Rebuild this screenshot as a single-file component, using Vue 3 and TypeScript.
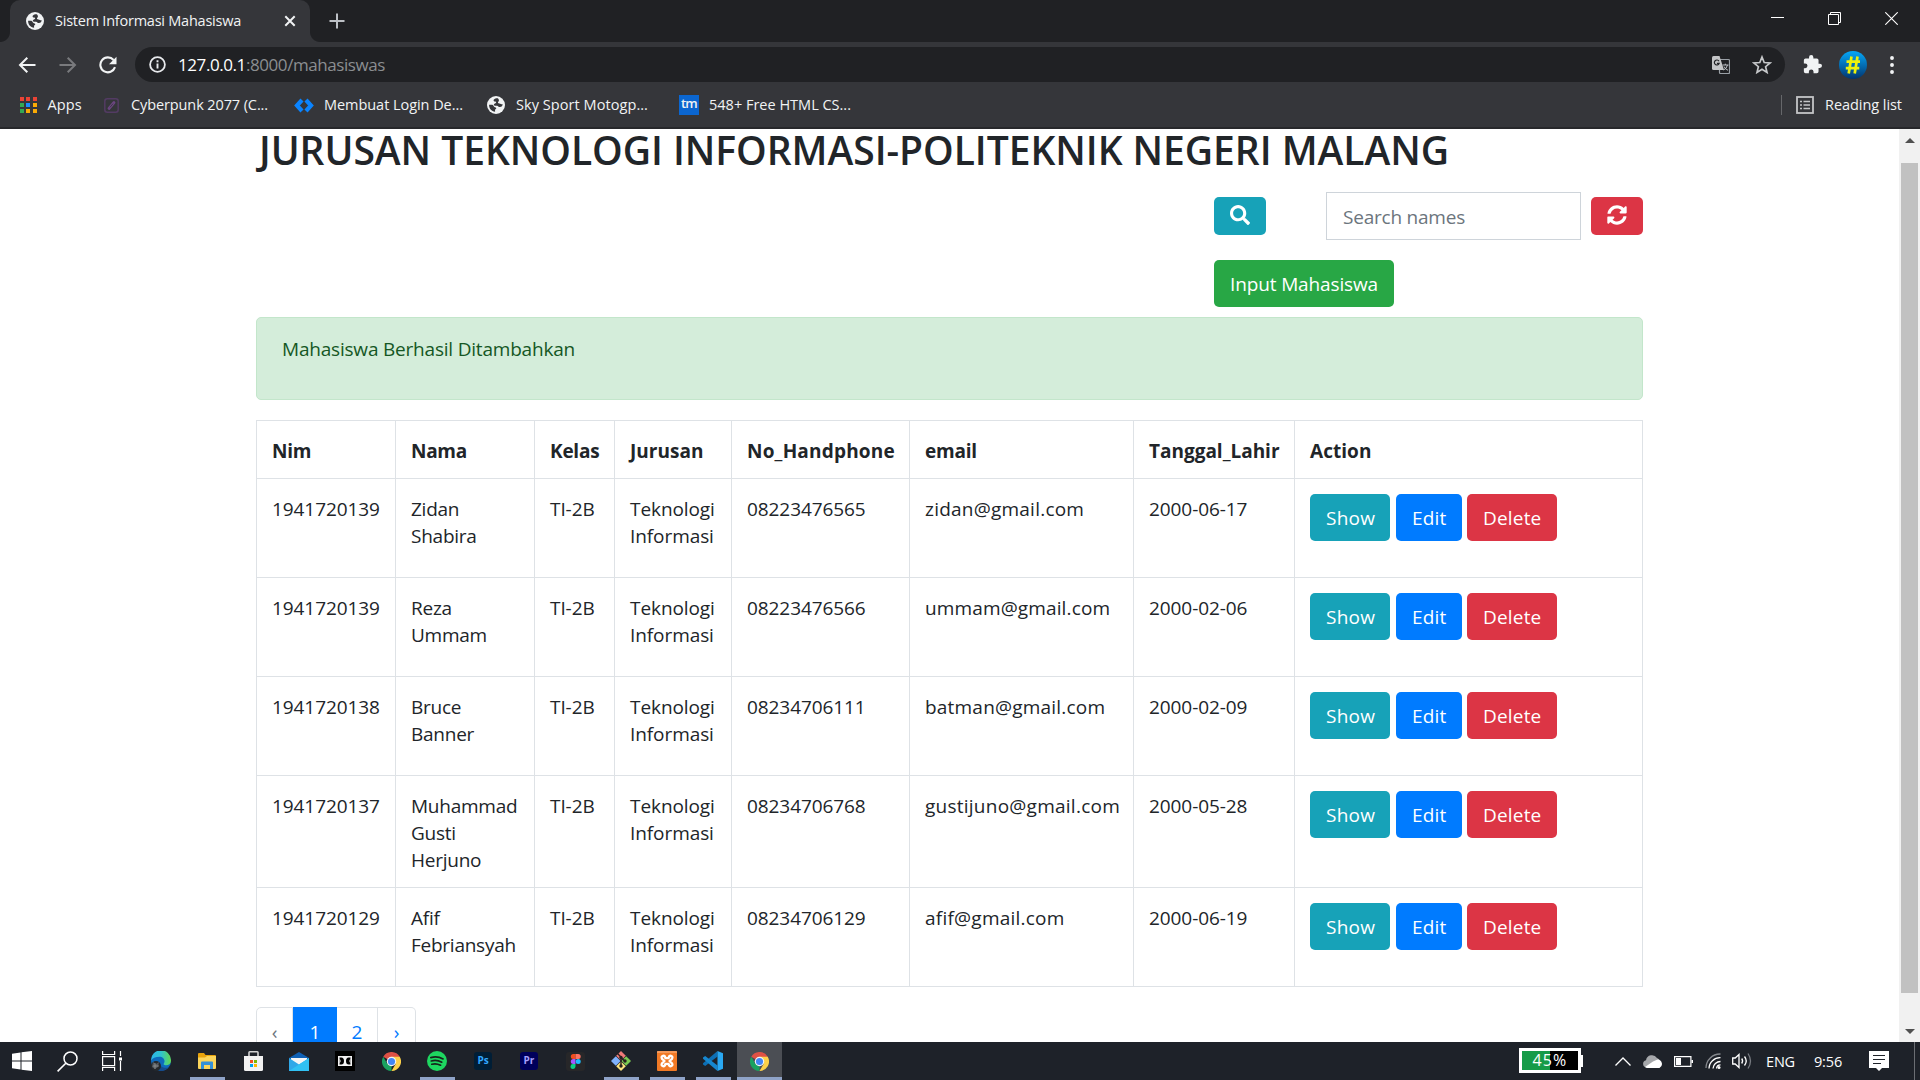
<script setup lang="ts">
import type { Directive } from 'vue'

interface Student {
  nim: string
  nama: string[]
  kelas: string
  phone: string
  email: string
  emailWidth: number
  lahir: string
}

const students: Student[] = [
  { nim: '1941720139', nama: ['Zidan', 'Shabira'], kelas: 'TI-2B', phone: '08223476565', email: 'zidan@gmail.com', emailWidth: 158, lahir: '2000-06-17' },
  { nim: '1941720139', nama: ['Reza', 'Ummam'], kelas: 'TI-2B', phone: '08223476566', email: 'ummam@gmail.com', emailWidth: 184, lahir: '2000-02-06' },
  { nim: '1941720138', nama: ['Bruce', 'Banner'], kelas: 'TI-2B', phone: '08234706111', email: 'batman@gmail.com', emailWidth: 179, lahir: '2000-02-09' },
  { nim: '1941720137', nama: ['Muhammad', 'Gusti', 'Herjuno'], kelas: 'TI-2B', phone: '08234706768', email: 'gustijuno@gmail.com', emailWidth: 193.5, lahir: '2000-05-28' },
  { nim: '1941720129', nama: ['Afif', 'Febriansyah'], kelas: 'TI-2B', phone: '08234706129', email: 'afif@gmail.com', emailWidth: 138.5, lahir: '2000-06-19' },
]

const headers = [
  { label: 'Nim', width: 39 },
  { label: 'Nama', width: 55.5 },
  { label: 'Kelas', width: 49 },
  { label: 'Jurusan', width: 73 },
  { label: 'No_Handphone', width: 147 },
  { label: 'email', width: 51.5 },
  { label: 'Tanggal_Lahir', width: 129.5 },
  { label: 'Action', width: 61 },
]

const appDots = ['#ea4335', '#ea4335', '#ea4335', '#34a853', '#1a8cff', '#fbab05', '#34a853', '#fbab05', '#fbab05']

// Tracks a label so that it takes up the given width in pixels.
const vFit: Directive<HTMLElement, number> = {
  mounted(el, binding) {
    const range = document.createRange()
    range.selectNodeContents(el)
    const natural = range.getBoundingClientRect().width
    const count = (el.textContent ?? '').trim().length
    if (count > 0) el.style.letterSpacing = `${(binding.value - natural) / count}px`
  },
}
</script>

<template>
  <div class="screen">
    <header class="browser">
      <div class="tabstrip">
        <div class="tab">
          <svg class="globe" width="18" height="18" viewBox="0 0 18 18"><circle cx="9" cy="9" r="9" fill="#f1f3f4" /><path d="M10.800 2.200C8.200 1.800 6 3.600 6.800 4.900c.7 1 2.300.3 2.400 1.300.1 1-2.500 1.200-2.400 2.600.1 1.300 2 .9 3.200 1 1.300.2 1.500 1.400 2.900 1.300 1.700-.1 2.700-1.400 2.800-2.800-1.200.2-2-.5-3.300-.7-1.500-.2-1.900-1.200-.9-2 .9-.8.400-2.700-.7-3.400zM2.100 8.800c-.2 3.500 2.300 6.700 6 7 .2-1.500-.6-2 .7-2.700 1-.6.300-1.800-.9-1.800-1.300-.1-1.200-2.200-2.600-2.500z" fill="#35363a" /></svg>
          <span class="tab-title" v-fit="186">Sistem Informasi Mahasiswa</span>
          <svg class="tab-close" width="12" height="12" viewBox="0 0 12 12"><path d="M1.300 1.300l9.400 9.400M10.700 1.300L1.300 10.700" stroke="#f1f3f4" stroke-width="2" /></svg>
        </div>
        <svg class="new-tab" width="16" height="16" viewBox="0 0 16 16"><path d="M8 .5v15M.5 8h15" stroke="#bdc1c6" stroke-width="2" /></svg>
        <div class="window-buttons">
          <svg width="13" height="13" viewBox="0 0 13 13"><path d="M0 5.500h13" stroke="#fff" /></svg>
          <svg width="13" height="13" viewBox="0 0 13 13"><path d="M.5 2.500h10v10H.5zM2.500 2.500v-2h10v10h-2" fill="none" stroke="#fff" /></svg>
          <svg width="13" height="13" viewBox="0 0 13 13"><path d="M.3.300l12.400 12.400M12.700.300L.3 12.700" stroke="#fff" stroke-width="1.100" /></svg>
        </div>
      </div>
      <div class="toolbar">
        <svg class="back" width="18" height="18" viewBox="0 0 18 18"><path d="M17.500 9H2M9.300 1.700L2 9l7.300 7.300" fill="none" stroke="#f1f3f4" stroke-width="2" /></svg>
        <svg class="forward" width="18" height="18" viewBox="0 0 18 18"><path d="M.5 9H16M8.700 1.700L16 9l-7.300 7.300" fill="none" stroke="#797a7d" stroke-width="2" /></svg>
        <svg class="reload" width="18" height="18" viewBox="0 0 18 18"><path d="M14.600 4A7.500 7.500 0 1 0 16 11.200" fill="none" stroke="#f1f3f4" stroke-width="2.100" /><path d="M17.500.800v7.400H10z" fill="#f1f3f4" /></svg>
        <div class="omnibox">
          <svg width="17" height="17" viewBox="0 0 17 17"><circle cx="8.500" cy="8.500" r="7.400" fill="none" stroke="#e8eaed" stroke-width="1.800" /><path d="M8.500 7.500v5M8.500 4.200v2" stroke="#e8eaed" stroke-width="1.900" /></svg>
          <span class="url" v-fit="207"><b>127.0.0.1</b>:8000/mahasiswas</span>
          <svg class="translate" width="18" height="18" viewBox="0 0 18 18"><rect x="7.500" y="3.500" width="10" height="14" rx="1" fill="#202124" stroke="#9aa0a6" stroke-width="1.200" /><path d="M1.500 0h6l4.500 14H1.500Q0 14 0 12.500v-11Q0 0 1.500 0z" fill="#c4c5c7" /><path d="M7 5.200a2.500 2.500 0 1 0 .2 2.200H4.900" fill="none" stroke="#202124" stroke-width="1.200" /><path d="M10.500 9h6M13.300 7.700V9M15.500 9q-1 4-4 5M12 10.500q1 2.500 4 3.800" fill="none" stroke="#bdc1c6" /></svg>
          <svg class="star" width="20" height="19" viewBox="0 0 20 19"><path d="M10 2l2.200 5.500 5.900.4-4.500 3.800 1.400 5.700-5-3.100-5 3.100 1.400-5.700L1.900 7.900l5.900-.4z" fill="none" stroke="#c6c8ca" stroke-width="1.700" /></svg>
        </div>
        <svg class="puzzle" width="19" height="19" viewBox="1 1 22 22"><path d="M20.500 11H19V7a2 2 0 0 0-2-2h-4V3.500a2.500 2.500 0 0 0-5 0V5H4a2 2 0 0 0-2 2v3.800h1.500a2.700 2.700 0 0 1 0 5.400H2V20a2 2 0 0 0 2 2h3.800v-1.500a2.700 2.700 0 0 1 5.400 0V22H17a2 2 0 0 0 2-2v-4h1.500a2.500 2.500 0 0 0 0-5z" fill="#f1f3f4" /></svg>
        <div class="avatar"><svg width="16" height="18" viewBox="0 0 16 18"><path d="M6.500.500L3.700 17.500M12.500.500L9.700 17.500M1.500 5.700H15M.8 12.200h13.500" stroke="#eef20b" stroke-width="2.700" /></svg></div>
        <svg class="menu" width="4" height="18" viewBox="0 0 4 18"><circle v-for="y in [2, 9, 16]" :key="y" cx="2" :cy="y" r="1.950" fill="#f1f3f4" /></svg>
      </div>
      <nav class="bookmarks">
        <div class="bookmark apps">
          <span class="app-grid"><i v-for="(c, i) in appDots" :key="i" :style="{ background: c }" /></span>
          <span v-fit="34">Apps</span>
        </div>
        <div class="bookmark b1">
          <svg width="15" height="15" viewBox="0 0 15 15"><rect x=".8" y=".8" width="13.400" height="13.400" rx="2.500" fill="none" stroke="#533b63" stroke-width="1.500" /><path d="M5 10.500l5-6" stroke="#6b4580" stroke-width="2.800" stroke-linecap="round" /><path d="M6 9.300l3-3.600" stroke="#35363a" stroke-width=".8" /></svg>
          <span v-fit="137">Cyberpunk 2077 (C...</span>
        </div>
        <div class="bookmark b2">
          <svg width="20" height="15" viewBox="0 0 20 15"><path d="M8 2L3 7.500 8 13M12 2l5 5.500-5 5.500" fill="none" stroke="#0a84ff" stroke-width="4.200" /></svg>
          <span v-fit="139">Membuat Login De...</span>
        </div>
        <div class="bookmark b3">
          <svg width="18" height="18" viewBox="0 0 18 18"><circle cx="9" cy="9" r="9" fill="#f1f3f4" /><path d="M10.800 2.200C8.200 1.800 6 3.600 6.800 4.900c.7 1 2.300.3 2.400 1.300.1 1-2.500 1.200-2.400 2.600.1 1.300 2 .9 3.200 1 1.300.2 1.500 1.400 2.900 1.300 1.700-.1 2.700-1.400 2.800-2.800-1.200.2-2-.5-3.300-.7-1.500-.2-1.900-1.200-.9-2 .9-.8.400-2.700-.7-3.400zM2.100 8.800c-.2 3.500 2.300 6.700 6 7 .2-1.500-.6-2 .7-2.700 1-.6.300-1.800-.9-1.800-1.300-.1-1.200-2.200-2.600-2.500z" fill="#35363a" /></svg>
          <span v-fit="132">Sky Sport Motogp...</span>
        </div>
        <div class="bookmark b4">
          <span class="tm">tm</span>
          <span v-fit="142">548+ Free HTML CS...</span>
        </div>
        <div class="bookmark reading">
          <svg width="18" height="18" viewBox="0 0 18 18"><rect x="1" y="1" width="16" height="16" fill="none" stroke="#c4c5c7" stroke-width="1.800" /><path d="M4 5.500h2M4 9h2M4 12.500h2M7.500 5.500H14M7.500 9H14M7.500 12.500H14" stroke="#c4c5c7" stroke-width="1.600" /></svg>
          <span v-fit="77">Reading list</span>
        </div>
      </nav>
    </header>

    <div class="viewport">
      <main class="page">
        <div class="container">
          <h2><span v-fit="1190">JURUSAN TEKNOLOGI INFORMASI-POLITEKNIK NEGERI MALANG</span></h2>
          <form class="search" @submit.prevent>
            <button class="btn info small" aria-label="Search">
              <svg width="20" height="20" viewBox="0 0 512 512"><path fill="#fff" d="M505 442.700L405.300 343c-4.500-4.500-10.600-7-17-7H372c27.600-35.300 44-79.700 44-128C416 93.100 322.900 0 208 0S0 93.100 0 208s93.100 208 208 208c48.300 0 92.700-16.400 128-44v16.300c0 6.400 2.500 12.500 7 17l99.700 99.700c9.400 9.400 24.600 9.400 33.900 0l28.300-28.300c9.400-9.400 9.400-24.600.1-34zM208 336c-70.700 0-128-57.200-128-128 0-70.700 57.200-128 128-128 70.700 0 128 57.200 128 128 0 70.700-57.200 128-128 128z" /></svg>
            </button>
            <div class="field"><span v-fit="122">Search names</span></div>
            <button class="btn danger small" aria-label="Refresh">
              <svg width="20" height="20" viewBox="0 0 512 512"><path fill="#fff" d="M370.720 133.280C339.458 104.008 298.888 87.962 255.848 88c-77.458.068-144.328 53.178-162.791 126.850-1.344 5.363-6.122 9.150-11.651 9.150H24.103c-7.498 0-13.194-6.807-11.807-14.176C33.933 94.924 134.813 8 256 8c66.448 0 126.791 26.136 171.315 68.685L463.030 40.970C478.149 25.851 504 36.559 504 57.941V192c0 13.255-10.745 24-24 24H345.941c-21.382 0-32.090-25.851-16.971-40.971l41.750-41.749zM32 296h134.059c21.382 0 32.090 25.851 16.971 40.971l-41.750 41.750c31.262 29.273 71.835 45.319 114.876 45.280 77.418-.07 144.315-53.144 162.787-126.849 1.344-5.363 6.122-9.150 11.651-9.150h57.304c7.498 0 13.194 6.807 11.807 14.176C478.067 417.076 377.187 504 256 504c-66.448 0-126.791-26.136-171.315-68.685L48.970 471.030C33.851 486.149 8 475.441 8 454.059V320c0-13.255 10.745-24 24-24z" /></svg>
            </button>
          </form>
          <div class="create"><a class="btn success"><span v-fit="148">Input Mahasiswa</span></a></div>
          <div class="alert"><p><span v-fit="293">Mahasiswa Berhasil Ditambahkan</span></p></div>

          <table>
            <colgroup>
              <col v-for="n in 8" :key="n" :class="'c' + n" />
            </colgroup>
            <thead>
              <tr>
                <th v-for="h in headers" :key="h.label"><span v-fit="h.width">{{ h.label }}</span></th>
              </tr>
            </thead>
            <tbody>
              <tr v-for="s in students" :key="s.phone">
                <td>{{ s.nim }}</td>
                <td class="nama"><template v-for="(part, i) in s.nama" :key="part"><br v-if="i > 0" />{{ part }}</template></td>
                <td>{{ s.kelas }}</td>
                <td>Teknologi<br />Informasi</td>
                <td>{{ s.phone }}</td>
                <td><span v-fit="s.emailWidth">{{ s.email }}</span></td>
                <td>{{ s.lahir }}</td>
                <td>
                  <div class="actions">
                    <a class="btn info show"><span v-fit="49">Show</span></a>
                    <a class="btn primary edit"><span v-fit="34">Edit</span></a>
                    <a class="btn danger delete"><span v-fit="58">Delete</span></a>
                  </div>
                </td>
              </tr>
            </tbody>
          </table>

          <ul class="pagination">
            <li class="prev">‹</li>
            <li class="current">1</li>
            <li class="two">2</li>
            <li class="next">›</li>
          </ul>
        </div>
      </main>
      <div class="scrollbar">
        <svg width="10" height="5" viewBox="0 0 10 5"><path d="M0 5l5-5 5 5z" fill="#505050" /></svg>
        <div class="thumb" />
        <svg width="10" height="5" viewBox="0 0 10 5"><path d="M0 0l5 5 5-5z" fill="#505050" /></svg>
      </div>
    </div>

    <footer class="taskbar">
      <div class="sys">
        <svg width="20" height="20" viewBox="0 0 20 20"><path d="M0 2.800L8.500 1.500v8H0zM9.500 1.300L20 0v9.500H9.500zM0 10.500h8.500v8L0 17.300zM9.500 10.500H20V20L9.500 18.700z" fill="#fff" /></svg>
      </div>
      <div class="sys">
        <svg width="21" height="21" viewBox="0 0 21 21"><circle cx="13.500" cy="7.500" r="6.500" fill="none" stroke="#fff" stroke-width="1.500" /><path d="M8.800 12.200L.6 20.400" stroke="#fff" stroke-width="1.600" /></svg>
      </div>
      <div class="sys">
        <svg width="20" height="20" viewBox="0 0 20 20"><path d="M.6 0v3.500h12V0M.6 5.600h12v9H.6zM.6 20v-3.500h12V20M18.500 0v5M18.500 10v10" fill="none" stroke="#fff" stroke-width="1.200" /><path d="M17 6.500h3v3h-3z" fill="#fff" /></svg>
      </div>
      <div class="apps-row">
        <div class="task">
          <svg width="20" height="20" viewBox="0 0 20 20"><defs><linearGradient id="eg" x1="0" x2="1"><stop offset="0" stop-color="#2bb5ea" /><stop offset=".5" stop-color="#2fc3cf" /><stop offset="1" stop-color="#62d84e" /></linearGradient></defs><circle cx="10" cy="10" r="10" fill="#0e6abc" /><path d="M0 9.500A10 10 0 0 1 20 9c.3 4-2.500 5.500-5.500 5.300-2.500-.2-2-1.600-1.300-2.600 1.200-3-1.200-5.900-4.700-5.900C4.500 5.800 1.200 7.500 0 9.500z" fill="url(#eg)" /><path d="M8 9c-1 5 3 9 9.500 7.500-2 2.700-5.500 4-9 3.300z" fill="#164b8d" /><circle cx="5" cy="15" r="5" fill="#25282b" /><path d="M2 11l3 2 3-2-1 5-3 2-3-2z" fill="#555b60" /><path d="M2 15h6M4 12v6" stroke="#999" stroke-width=".7" /></svg>
        </div>
        <div class="task open">
          <svg width="18" height="17" viewBox="0 0 18 17"><path d="M0 1q0-1 1-1h5l1.500 2H17q1 0 1 1v3H0z" fill="#e8a30c" /><path d="M0 4.500h7L9 3h9v12q0 1-1 1H1q-1 0-1-1z" fill="#fbd55b" /><path d="M3 16V9.500q0-1 1-1h10q1 0 1 1V16h-3v-4H6v4z" fill="#3390d8" /></svg>
        </div>
        <div class="task">
          <svg width="19" height="20" viewBox="0 0 19 20"><path d="M5 6V1.500Q5 .8 5.700.800h7.600q.7 0 .7.700V6" fill="none" stroke="#d2d2d2" stroke-width="1.600" /><path d="M0 5h19v13.500q0 1.500-1.500 1.500h-16Q0 20 0 18.500z" fill="#f2f2f2" /><path d="M6 9h3v3H6z" fill="#f25022" /><path d="M10 9h3v3h-3z" fill="#7fba00" /><path d="M6 13h3v3H6z" fill="#00a4ef" /><path d="M10 13h3v3h-3z" fill="#ffb900" /></svg>
        </div>
        <div class="task">
          <svg width="20" height="19" viewBox="0 0 20 19"><path d="M0 6l10-6 10 6v4H0z" fill="#0f60b4" /><path d="M2 6h16v7H2z" fill="#f5f5f5" /><path d="M0 6l10 6.500L20 6v13H0z" fill="#30a8e8" /><path d="M0 19L20 6v13z" fill="#31c1f3" /></svg>
        </div>
        <div class="task">
          <svg width="20" height="20" viewBox="0 0 20 20"><path d="M0 0h20v20H0z" fill="#000" /><path d="M3 5h14v10H3z" fill="#f2f2f2" /><path d="M4.500 6.500h1.800q2.700 0 2.700 3.500t-2.700 3.500H4.500zM15.500 6.500h-1.800q-2.700 0-2.700 3.500t2.700 3.500h1.800z" fill="#000" /><path d="M4.500 7v6l1.200-3zM15.500 7v6l-1.200-3z" fill="#f2f2f2" /></svg>
        </div>
        <div class="task">
          <svg width="19" height="19" viewBox="0 0 48 48"><path d="M24 24L3.200 12A24 24 0 0 1 44.800 12z" fill="#de5145" /><path d="M24 24v24A24 24 0 0 1 3.200 12L13.600 30z" fill="#1aa260" /><path d="M24 12h20.800A24 24 0 0 1 24 48l10.400-18z" fill="#fdd149" /><circle cx="24" cy="24" r="12" fill="#f5f5f5" /><circle cx="24" cy="24" r="9" fill="#4287f5" /></svg>
        </div>
        <div class="task open">
          <svg width="20" height="20" viewBox="0 0 20 20"><circle cx="10" cy="10" r="10" fill="#1ed760" /><path d="M3.800 6.600q6.500-1.800 12.300 1.300M4.300 10q5.500-1.500 10.500 1.200M4.800 13.200q4.500-1.200 8.800 1" fill="none" stroke="#16231b" stroke-width="1.700" stroke-linecap="round" /></svg>
        </div>
        <div class="task"><span class="adobe ps">Ps</span></div>
        <div class="task"><span class="adobe pr">Pr</span></div>
        <div class="task">
          <svg width="19" height="19" viewBox="0 0 19 19"><rect width="19" height="19" rx="3" fill="#272729" /><path d="M9.500 2H7.300a2.500 2.500 0 0 0 0 5h2.200z" fill="#f24e1e" /><path d="M9.500 2h2.700a2.500 2.500 0 0 1 0 5H9.500z" fill="#ff7262" /><path d="M9.500 7H7.300a2.500 2.500 0 0 0 0 5h2.200z" fill="#a259ff" /><circle cx="12.200" cy="9.500" r="2.500" fill="#1abcfe" /><path d="M9.500 12H7.300a2.500 2.500 0 1 0 2.200 2.500z" fill="#0acf83" /></svg>
        </div>
        <div class="task open">
          <svg width="20" height="20" viewBox="0 0 20 20"><path d="M10 0l4.800 4.800L10 9.600 5.200 4.800z" fill="#f07a78" /><path d="M4.800 5.200l4.800 4.800-4.800 4.800L0 10z" fill="#80b3ff" /><path d="M15.200 5.200L20 10l-4.800 4.800-4.800-4.800z" fill="#7ccb52" /><path d="M10 10.400l4.800 4.800L10 20l-4.800-4.800z" fill="#ffe680" /><path d="M6 2l4 4v10M10 6.500l4 4" fill="none" stroke="#27211f" stroke-width="1.400" /><circle cx="10" cy="15" r="1.700" fill="#27211f" /><circle cx="14" cy="10" r="1.700" fill="#27211f" /><circle cx="10" cy="6.500" r="1.700" fill="#27211f" /></svg>
        </div>
        <div class="task open">
          <svg width="20" height="20" viewBox="0 0 20 20"><rect width="20" height="20" rx="1" fill="#f17a26" /><path d="M0 1h20" stroke="#f9b98d" /><path d="M7.500 10L5 7.800Q3.800 5.500 6 4.800 8 4.500 8.500 7.200h3Q12 4.500 14 4.800q2.200.7 1 3L12.500 10l2.500 2.300q1.200 2.200-1 2.900-2 .3-2.500-2.400h-3Q8 15.500 6 15.200q-2.200-.7-1-2.900z" fill="none" stroke="#fff" stroke-width="2.300" stroke-linejoin="round" /></svg>
        </div>
        <div class="task open">
          <svg width="20" height="20" viewBox="0 0 20 20"><path d="M14.500 0v5.500L2.200 15 0 13.500v-1.300z" fill="#0d6fb5" /><path d="M14.500 20v-5.500L2.200 5 0 6.500v1.300z" fill="#1687cf" /><path d="M14.500 0L20 2.200v15.600L14.500 20z" fill="#2aa8f2" /></svg>
        </div>
        <div class="task open active">
          <svg width="19" height="19" viewBox="0 0 48 48"><path d="M24 24L3.200 12A24 24 0 0 1 44.800 12z" fill="#de5145" /><path d="M24 24v24A24 24 0 0 1 3.200 12L13.600 30z" fill="#1aa260" /><path d="M24 12h20.800A24 24 0 0 1 24 48l10.400-18z" fill="#fdd149" /><circle cx="24" cy="24" r="12" fill="#f5f5f5" /><circle cx="24" cy="24" r="9" fill="#4287f5" /></svg>
        </div>
      </div>
      <div class="tray">
        <div class="battery"><div class="level"><span v-fit="35">45%</span></div><i /></div>
        <svg class="caret" width="16" height="9" viewBox="0 0 16 9"><path d="M.5 8.500L8 1l7.500 7.500" fill="none" stroke="#fff" stroke-width="1.300" /></svg>
        <svg class="cloud" width="20" height="14" viewBox="0 0 20 14"><path d="M3.500 13.500a3.700 3.700 0 0 1-.5-7.300A6 6 0 0 1 14 4q2.500 1 3 3l-8 6.500z" fill="#a5a7aa" /><path d="M4.500 14a3.500 3.500 0 0 1-2.500-1l8-5.500 4.500-2a4.500 4.500 0 0 1 2 8.500z" fill="#fff" /></svg>
        <svg class="batt" width="19" height="11" viewBox="0 0 19 11"><path d="M.6.600h16.300v9.800H.6z" fill="none" stroke="#fff" stroke-width="1.200" /><path d="M2 2h5v7H2zM17.500 4H19v3h-1.500z" fill="#fff" /></svg>
        <svg class="wifi" width="16" height="16" viewBox="0 0 16 16"><g fill="none"><path d="M1 15A14 14 0 0 1 15.500 1" stroke="#85888d" stroke-width="1.300" /><path d="M4 15.500A11 11 0 0 1 15.500 4.700M8 15.500a7.500 7.500 0 0 1 7.500-7" stroke="#fff" stroke-width="1.300" /><path d="M11.500 15.500a4 4 0 0 1 4-3.700" stroke="#fff" stroke-width="1.200" /></g><circle cx="14" cy="14.500" r="1.500" fill="#fff" /></svg>
        <svg class="vol" width="20" height="18" viewBox="0 0 20 18"><g fill="none" stroke="#fff" stroke-width="1.300"><path d="M.7 6h2.500L7 2.500v13L3.200 12H.7z" /><path d="M9.700 6.500q1.800 2.500 0 5M12.500 4.500q3.500 4.500 0 9" /><path d="M16 1.500q5 7.500 0 15" stroke="#777a80" /></g></svg>
        <span class="lang" v-fit="29">ENG</span>
        <span class="clock" v-fit="28">9:56</span>
        <svg class="note" width="20" height="20" viewBox="0 0 20 20"><path d="M0 0h20v17h-7l-3 3-3-3H0z" fill="#fff" /><path d="M4 4.500h12M4 8.500h12M4 12.500h8" stroke="#1f232a" /></svg>
        <div class="edge" />
      </div>
    </footer>
  </div>
</template>

<style>
body {
  margin: 0;
  overflow: hidden;
}
</style>

<style scoped>
* {
  box-sizing: border-box;
}
svg {
  display: block;
  flex: none;
}
.screen {
  width: 1920px;
  height: 1080px;
  display: flex;
  flex-direction: column;
  overflow: hidden;
  font-family: 'Open Sans', 'Noto Sans', sans-serif;
  background: #fff;
}
.browser {
  height: 129px;
  flex: none;
  background: #35363a;
  border-bottom: 2px solid #27282b;
  color: #f1f3f4;
  font-size: 14.500px;
  white-space: nowrap;
}
.tabstrip {
  height: 42px;
  background: #202124;
  display: flex;
  align-items: center;
  padding-left: 10px;
}
.tab {
  position: relative;
  width: 300px;
  height: 42px;
  background: #35363a;
  border-radius: 10px 10px 0 0;
  display: flex;
  align-items: center;
  padding-left: 16px;
}
.tab::before,
.tab::after {
  content: '';
  position: absolute;
  bottom: 0;
  width: 10px;
  height: 10px;
}
.tab::before {
  left: -10px;
  background: radial-gradient(circle at 0 0, #202124 9.500px, #35363a 10.500px);
}
.tab::after {
  right: -10px;
  background: radial-gradient(circle at 100% 0, #202124 9.500px, #35363a 10.500px);
}
.tab-title {
  margin-left: 11px;
  width: 190px;
  line-height: 20px;
}
.tab-close {
  margin-left: 39px;
}
.new-tab {
  margin-left: 19px;
}
.window-buttons {
  margin-left: auto;
  display: flex;
  gap: 44px;
  padding-right: 22px;
  margin-top: -5px;
}
.toolbar {
  height: 45px;
  display: flex;
  align-items: center;
  padding: 0 26px 0 18px;
}
.forward {
  margin-left: 23px;
}
.reload {
  margin-left: 22px;
}
.omnibox {
  margin-left: 18px;
  flex: 1;
  height: 35px;
  border-radius: 18px;
  background: #202124;
  display: flex;
  align-items: center;
  padding-left: 14px;
  padding-right: 13px;
}
.url {
  font-size: 17px;
  margin-left: 12px;
  color: #8b8e91;
  line-height: 24px;
}
.url b {
  font-weight: 400;
  color: #fff;
}
.translate {
  margin-left: auto;
}
.star {
  margin-left: 22px;
}
.puzzle {
  margin-left: 18px;
}
.avatar {
  margin-left: 17px;
  width: 28px;
  height: 28px;
  border-radius: 50%;
  background: linear-gradient(#05a8f8, #03356f);
  display: flex;
  align-items: center;
  justify-content: center;
}
.menu {
  margin-left: 23px;
}
.bookmarks {
  height: 36px;
  display: flex;
  align-items: center;
  padding-left: 20px;
}
.bookmark {
  display: flex;
  align-items: center;
  flex: none;
  line-height: 20px;
}
.app-grid {
  display: grid;
  grid-template-columns: repeat(3, 4px);
  gap: 2.300px;
  margin-right: 11px;
}
.app-grid i {
  height: 4px;
}
.apps {
  width: 84px;
}
.b1 {
  width: 190px;
}
.b1 svg {
  margin-right: 12px;
}
.b2 {
  width: 193px;
}
.b2 svg {
  margin-right: 10px;
}
.b3 {
  width: 192px;
}
.b3 svg {
  margin-right: 11px;
}
.tm {
  width: 20px;
  height: 20px;
  margin-right: 10px;
  background: #0b66d0;
  font-size: 13px;
  font-weight: 600;
  line-height: 17px;
  text-align: center;
  letter-spacing: -0.800px;
}
.reading {
  margin-left: auto;
  width: 139px;
  height: 20px;
  border-left: 1px solid #66676a;
  padding-left: 14px;
}
.reading svg {
  margin-right: 11px;
}
.viewport {
  flex: 1;
  min-height: 0;
  display: flex;
}
.page {
  flex: 1;
  overflow: hidden;
  color: #212529;
  font-size: 19px;
  line-height: 27px;
}
.container {
  width: 1387px;
  margin-left: 256px;
}
h2 {
  margin: 0;
  height: 63px;
  padding-left: 3px;
  font-size: 39px;
  font-weight: 600;
  line-height: 41px;
  white-space: nowrap;
}
.search {
  display: flex;
  align-items: center;
  justify-content: flex-end;
  height: 48px;
}
.btn {
  border: 0;
  border-radius: 5px;
  height: 47px;
  color: #fff;
  display: flex;
  align-items: center;
  padding: 1px 0 0 16px;
  white-space: nowrap;
}
.small {
  width: 52px;
  height: 38px;
  padding: 0 0 2px 16px;
}
.info {
  background: #17a2b8;
}
.primary {
  background: #007bff;
}
.danger {
  background: #dc3545;
}
.success {
  background: #28a745;
  width: 180px;
}
.field {
  width: 255px;
  height: 48px;
  border: 1px solid #ced4da;
  margin: 0 10px 0 60px;
  padding: 11px 0 0 16px;
  color: #6c757d;
}
.create {
  display: flex;
  margin: 20px 0 10px 958px;
}
.alert {
  height: 83px;
  border: 1px solid #c3e6cb;
  border-radius: 5px;
  background: #d4edda;
  color: #155724;
  padding: 18px 25px;
  margin-bottom: 20px;
}
.alert p {
  margin: 0;
}
table {
  width: 1387px;
  table-layout: fixed;
  border-collapse: collapse;
  letter-spacing: -0.080px;
}
.c1 { width: 139px; }
.c2 { width: 139px; }
.c3 { width: 80px; }
.c4 { width: 117px; }
.c5 { width: 178px; }
.c6 { width: 224px; }
.c7 { width: 161px; }
.c8 { width: 348px; }
th,
td {
  border: 1px solid #dee2e6;
  padding: 17px 0 13px 15px;
  text-align: left;
  vertical-align: top;
  white-space: nowrap;
}
th {
  height: 58px;
  font-weight: 700;
}
td {
  height: 99px;
}
.nama {
  letter-spacing: -0.250px;
}
.actions {
  display: flex;
  margin-top: -2px;
}
.show {
  width: 80px;
  margin-right: 6px;
}
.edit {
  width: 66px;
  margin-right: 5px;
}
.delete {
  width: 90px;
}
.pagination {
  list-style: none;
  margin: 20px 0 0;
  padding: 0;
  display: flex;
  height: 48px;
  color: #007bff;
}
.pagination li {
  border: 1px solid #dee2e6;
  border-left: 0;
  text-align: center;
  line-height: 48px;
}
.pagination .prev {
  width: 37px;
  border-left: 1px solid #dee2e6;
  border-radius: 5px 0 0 5px;
  color: #6c757d;
}
.pagination .current {
  width: 44px;
  border-color: #007bff;
  background: #007bff;
  color: #fff;
  padding-left: 1px;
}
.pagination .two {
  width: 41px;
}
.pagination .next {
  width: 38px;
  border-radius: 0 5px 5px 0;
}
.scrollbar {
  width: 21px;
  background: #f1f1f1;
  display: flex;
  flex-direction: column;
  align-items: center;
  padding: 9px 0 8px;
}
.thumb {
  width: 17px;
  height: 830px;
  margin: 20px 0 auto;
  background: #c1c1c1;
}
.taskbar {
  height: 38px;
  flex: none;
  background: #1e2229;
  display: flex;
  color: #fff;
}
.sys {
  width: 45px;
  display: flex;
  align-items: center;
  justify-content: center;
  padding-right: 1px;
}
.apps-row {
  display: flex;
  margin-left: 3px;
}
.task {
  width: 46px;
  height: 38px;
  display: flex;
  align-items: center;
  justify-content: center;
}
.open {
  background: linear-gradient(#8fa3c8, #8fa3c8) 6px 35px / 35px 3px no-repeat;
}
.active {
  width: 45px;
  margin-left: 1px;
  background: linear-gradient(#8fa3c8, #8fa3c8) 0 35px / 45px 3px no-repeat #4b4e54;
}
.adobe {
  width: 18px;
  height: 18px;
  border-radius: 3px;
  font-size: 10px;
  font-weight: 700;
  line-height: 17px;
  text-align: center;
}
.ps {
  background: #001e36;
  color: #31a8ff;
}
.pr {
  background: #00005b;
  color: #a6a0ff;
}
.tray {
  margin-left: auto;
  display: flex;
  align-items: center;
  width: 401px;
  font-size: 14.500px;
}
.battery {
  width: 64px;
  display: flex;
  align-items: center;
  padding-bottom: 1px;
}
.battery i {
  width: 2px;
  height: 12px;
  background: #fff;
}
.level {
  width: 62px;
  height: 25px;
  border: 3px solid #fff;
  background: linear-gradient(90deg, #169b48 50%, #000 50%);
  text-align: center;
  font-size: 16px;
  line-height: 19px;
}
.caret { margin-left: 32px; }
.cloud { margin-left: 12px; }
.batt { margin-left: 11px; }
.wifi { margin-left: 12px; }
.vol { margin-left: 11px; }
.lang { margin-left: 14px; width: 30px; }
.clock { margin-left: 18px; width: 29px; }
.note { margin-left: 26px; }
.edge {
  margin-left: auto;
  margin-right: 5px;
  width: 1px;
  height: 38px;
  background: #6b6e73;
}
</style>
